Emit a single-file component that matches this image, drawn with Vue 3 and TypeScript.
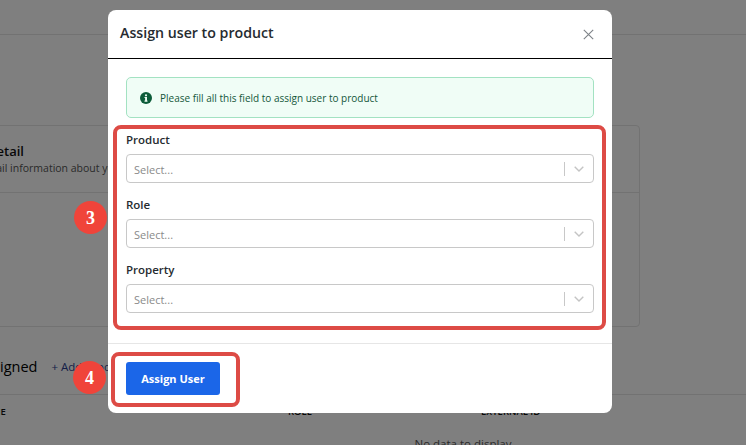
<script setup lang="ts">
const fields: string[] = ['Product', 'Role', 'Property']
</script>

<template>
  <div class="page">
    <header class="topbar"></header>
    <section class="card">
      <div class="card-head">
        <h3>Detail</h3>
        <p>Detail information about your product</p>
      </div>
    </section>
    <section class="assigned">
      <div class="assigned-head">
        <h2>Assigned</h2>
        <span class="add">+ Add product</span>
      </div>
      <div class="thead">
        <span class="c1">NAME</span>
        <span class="c2">ROLE</span>
        <span class="c3">EXTERNAL ID</span>
      </div>
      <div class="empty">No data to display</div>
    </section>

    <div class="backdrop"></div>

    <div class="modal">
      <div class="modal-head">
        <h1>Assign user to product</h1>
        <svg class="close" width="11" height="11" viewBox="0 0 11 11" fill="none" stroke="#7d8287" stroke-width="1.1">
          <path d="M.8.8l9.4 9.4M10.2.8L.8 10.2" />
        </svg>
      </div>
      <div class="modal-body">
        <div class="alert">
          <svg width="12" height="12" viewBox="0 0 12 12">
            <circle cx="6" cy="6" r="6" fill="#0d5c3a" />
            <rect x="5.1" y="5" width="1.9" height="4.4" fill="#eefcf4" />
            <rect x="4.5" y="5" width="2" height="1" fill="#eefcf4" />
            <rect x="4.4" y="8.6" width="3.2" height="1" fill="#eefcf4" />
            <circle cx="6" cy="3.3" r="1.1" fill="#eefcf4" />
          </svg>
          <span>Please fill all this field to assign user to product</span>
        </div>
        <div class="fields">
          <div v-for="f in fields" :key="f" class="field">
            <label>{{ f }}</label>
            <div class="select">
              <span class="ph">Select...</span>
              <i class="sep"></i>
              <svg class="chev" width="10" height="6" viewBox="0 0 10 6" fill="none" stroke="#c4c4c4" stroke-width="1.4">
                <path d="M.7.7L5 5l4.3-4.3" />
              </svg>
            </div>
          </div>
        </div>
      </div>
      <div class="modal-foot">
        <button class="assign" type="button">Assign User</button>
      </div>
    </div>

    <div class="mark mark-fields"></div>
    <div class="mark mark-button"></div>
    <div class="badge badge-3">3</div>
    <div class="badge badge-4">4</div>
  </div>
</template>

<style>
html, body { margin: 0; padding: 0; background: #fff; }
</style>

<style scoped>
.page {
  position: relative;
  width: 746px;
  height: 445px;
  overflow: hidden;
  background: #fff;
  font-family: "Open Sans", "Noto Sans", sans-serif;
  color: #1f2328;
}
.topbar { height: 34px; border-bottom: 1px solid #e4e4e4; }
.card {
  box-sizing: border-box;
  height: 202px;
  width: 700px;
  margin: 90px 0 0 -60px;
  border: 1px solid #e4e4e4;
  border-radius: 4px;
}
.card-head {
  box-sizing: border-box;
  height: 67px;
  padding: 16px 0 0 46px;
  border-bottom: 1px solid #e4e4e4;
}
.card-head h3 { margin: 0; font-size: 13px; line-height: 18px; font-weight: 600; color: #111; }
.card-head p { margin: 0 0 0 -8px; font-size: 10.5px; line-height: 16px; color: #555; }
.assigned { margin-top: 30px; }
.assigned-head {
  display: flex;
  align-items: center;
  gap: 14px;
  height: 38px;
  border-bottom: 1px solid #e4e4e4;
  padding-bottom: 18px;
  box-sizing: border-box;
}
.assigned-head h2 { margin: 0 0 0 -23px; font-size: 14.5px; font-weight: 400; color: #000; }
.add { font-size: 11.5px; color: #2b3f8f; white-space: nowrap; }
.thead { position: relative; height: 33px; font-size: 9.5px; font-weight: 600; color: #111; }
.thead span { position: absolute; top: 10px; }
.c1 { left: -22px; }
.c2 { left: 288px; }
.c3 { left: 481px; }
.empty { text-align: center; font-size: 11.5px; color: #555; padding-left: 180px; margin-top: 8px; }
.backdrop { position: absolute; inset: 0; background: rgba(0, 0, 0, .5); }
.modal {
  position: absolute;
  left: 108px;
  top: 10px;
  width: 504px;
  height: 403px;
  background: #fff;
  border-radius: 8px;
  display: flex;
  flex-direction: column;
}
.modal-head {
  box-sizing: border-box;
  height: 49px;
  display: flex;
  align-items: center;
  justify-content: space-between;
  padding: 0 18px 4px 12px;
  border-bottom: 1px solid #000;
}
.modal-head h1 { margin: 0; font-size: 14.2px; font-weight: 600; color: #262b30; }
.close { margin-top: 4px; }
.modal-body { box-sizing: border-box; height: 285px; padding: 18px 18px 0; border-bottom: 1px solid #e6e6e6; }
.alert {
  box-sizing: border-box;
  height: 41px;
  display: flex;
  align-items: center;
  gap: 8px;
  padding-left: 13px;
  background: #f0fdf6;
  border: 1px solid #a3e2c2;
  border-radius: 5px;
  font-size: 10px;
  color: #14573a;
}
.fields { margin-top: 12px; display: flex; flex-direction: column; gap: 12px; }
.field label { display: block; height: 24px; font-size: 11.5px; line-height: 20px; font-weight: 600; color: #262b30; }
.select {
  box-sizing: border-box;
  height: 29px;
  display: flex;
  align-items: center;
  border: 1px solid #c8c8c8;
  border-radius: 4px;
  padding-left: 7px;
}
.ph { flex: 1; font-size: 11px; color: #8a8a8a; padding-top: 2px; }
.sep { width: 1px; height: 14px; background: #c8c8c8; }
.chev { margin: 0 9px 0 9px; }
.modal-foot { flex: 1; padding: 18px 18px 0; }
.assign {
  width: 94px;
  height: 33px;
  border: none;
  border-radius: 3px;
  background: #1b66e8;
  color: #fff;
  font-family: inherit;
  font-size: 11px;
  font-weight: 700;
  padding: 0;
}
.mark {
  position: absolute;
  box-sizing: border-box;
  border: 4px solid #dd4b45;
  border-radius: 8px;
}
.mark-fields { left: 113px; top: 125px; width: 493px; height: 205px; }
.mark-button { left: 111px; top: 352px; width: 129px; height: 55px; }
.badge {
  position: absolute;
  width: 33px;
  height: 33px;
  border-radius: 50%;
  background: #f0443a;
  color: #fff;
  font-family: "Liberation Serif", serif;
  font-weight: 700;
  font-size: 18px;
  line-height: 35px;
  text-align: center;
}
.badge-3 { left: 74px; top: 201px; }
.badge-4 { left: 73px; top: 361px; }
</style>
